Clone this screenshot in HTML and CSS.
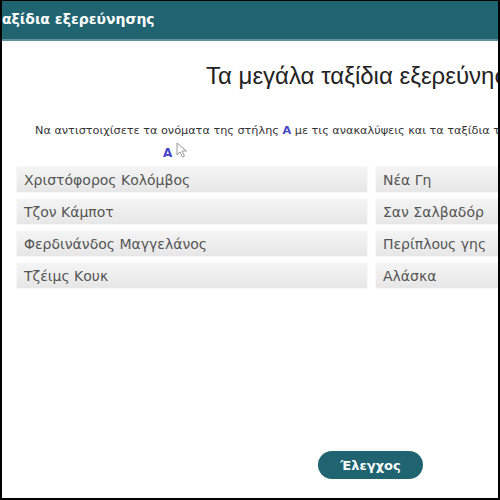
FILE: index.html
```html
<!DOCTYPE html>
<html lang="el">
<head>
    <meta charset="UTF-8">
    <meta name="viewport" content="width=device-width, initial-scale=1.0">
    <title>Τα μεγάλα ταξίδια εξερεύνησης</title>
    <link rel="stylesheet" href="styles.css">
</head>
<body>
    <div class="frame">
        <div class="topbar">
            <span class="topbar-title">ταξίδια εξερεύνησης</span>
        </div>

        <h1>Τα μεγάλα ταξίδια εξερεύνησης</h1>

        <p class="instructions">
            Να αντιστοιχίσετε τα ονόματα της στήλης <span class="col-name">A</span> με τις ανακαλύψεις και τα ταξίδια τους
        </p>
        <div class="col-label">
            <span class="col-name">A</span>
            <svg class="pointer" width="12" height="16" viewBox="0 0 12 16">
                <path d="M1 1 L1 13 L4 10 L6.5 15 L8.5 14 L6 9 L10.5 9 Z" fill="#fff" stroke="#9a9a9a" stroke-width="1"/>
            </svg>
        </div>

        <div class="pairs">
            <div class="cell">Χριστόφορος Κολόμβος</div>
            <div class="cell">Νέα Γη</div>
            <div class="cell">Τζον Κάμποτ</div>
            <div class="cell">Σαν Σαλβαδόρ</div>
            <div class="cell">Φερδινάνδος Μαγγελάνος</div>
            <div class="cell">Περίπλους γης</div>
            <div class="cell">Τζέιμς Κουκ</div>
            <div class="cell">Αλάσκα</div>
        </div>

        <div class="actions">
            <button type="button" class="check">Έλεγχος</button>
        </div>
    </div>
</body>
</html>
```

FILE: styles.css
```css
html, body {
    margin: 0;
    padding: 0;
    background-color: #000;
}
.frame {
    box-sizing: border-box;
    width: 500px;
    height: 500px;
    border-top: 1px solid #000;
    border-left: 2px solid #000;
    border-right: 2px solid #000;
    border-bottom: 2px solid #000;
    background-color: #fff;
    overflow: hidden;
    font-family: "DejaVu Sans", Verdana, sans-serif;
    color: #333;
}
.topbar {
    height: 38px;
    background-color: #1f6470;
    border-bottom: 2px solid #5f8f98;
    display: flex;
    align-items: center;
    white-space: nowrap;
}
.topbar-title {
    margin-left: -9px;
    margin-top: -3px;
    color: #fff;
    font-weight: bold;
    font-size: 14px;
}
h1 {
    margin: 21px 0 0 204px;
    font-family: "Liberation Sans", Arial, sans-serif;
    font-weight: normal;
    font-size: 24px;
    color: #222;
    white-space: nowrap;
}
.instructions {
    margin: 34px 0 0 33px;
    font-size: 11.25px;
    color: #333;
    white-space: nowrap;
}
.col-name {
    color: #4545c8;
    font-weight: bold;
}
.col-label {
    display: flex;
    align-items: flex-start;
    gap: 4px;
    margin: 9px 0 0 161px;
    height: 18px;
    font-size: 12px;
}
.pointer {
    margin-top: -4px;
}
.pairs {
    display: grid;
    grid-template-columns: 352px 160px;
    column-gap: 7px;
    row-gap: 5px;
    margin: 2px 0 0 14px;
}
.cell {
    height: 27px;
    box-sizing: border-box;
    padding: 5px 7px 0;
    font-size: 14px;
    color: #555;
    background: linear-gradient(#f4f4f4, #e7e7e7);
    border: 1px solid #f8f8f8;
    border-radius: 2px;
    white-space: nowrap;
}
.actions {
    display: flex;
    margin: 162px 0 0 316px;
}
.check {
    width: 105px;
    height: 28px;
    border: none;
    border-radius: 14px;
    background-color: #1f6470;
    color: #fff;
    font-family: "DejaVu Sans", Verdana, sans-serif;
    font-weight: bold;
    font-size: 13px;
    cursor: pointer;
}
```
